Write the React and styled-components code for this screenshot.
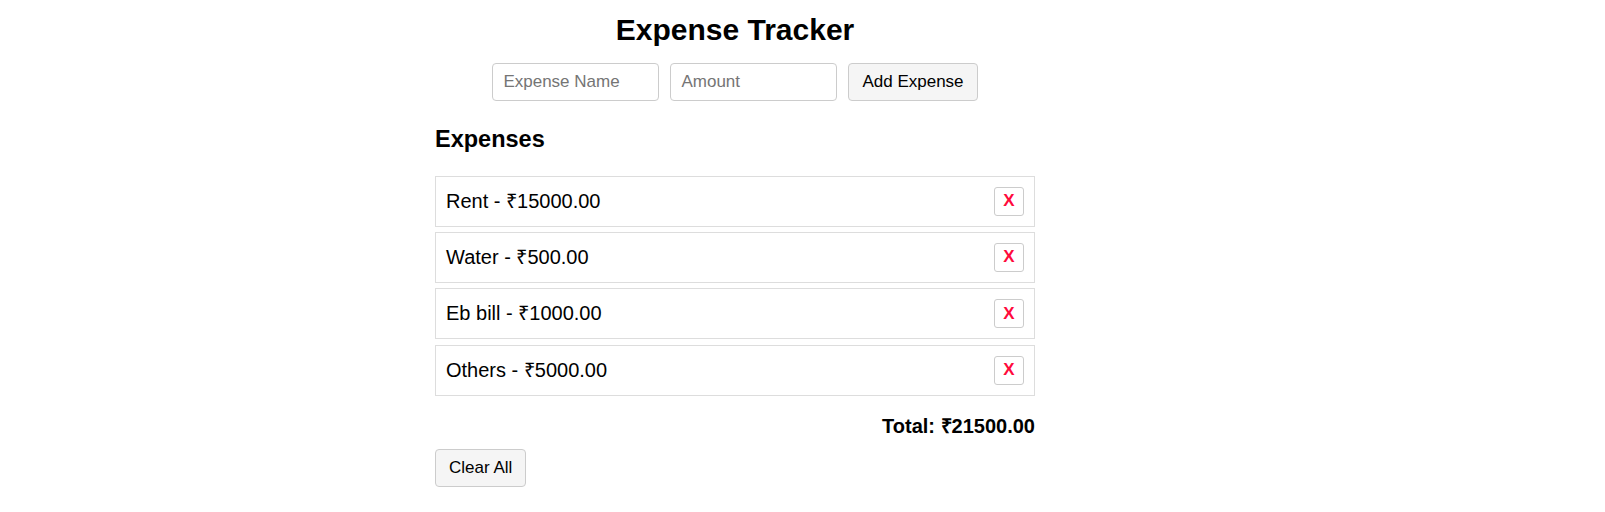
import React, { useState } from "react";
import styled, { createGlobalStyle } from "styled-components";

const GlobalStyle = createGlobalStyle`
  html, body { margin: 0; padding: 0; background: #ffffff; }
  body { font-family: Arial, "Liberation Sans", Helvetica, sans-serif; color: #000; }
`;

const Page = styled.main`
  width: 600px;
  margin-left: 435px;
  display: flex;
  flex-direction: column;
`;

const Title = styled.h1`
  margin: 13px 0 0;
  font-size: 30px;
  line-height: 34px;
  font-weight: 700;
  text-align: center;
`;

const Form = styled.form`
  margin-top: 16px;
  display: flex;
  justify-content: center;
  gap: 11px;
`;

const Input = styled.input`
  box-sizing: border-box;
  width: 167px;
  height: 38px;
  padding: 0 10px;
  border: 1px solid #cccccc;
  border-radius: 4px;
  font-family: inherit;
  font-size: 17px;
  color: #000;
  outline: none;
  &::placeholder { color: #757575; }
`;

const Button = styled.button`
  box-sizing: border-box;
  height: 38px;
  padding: 0 13px;
  border: 1px solid #cccccc;
  border-radius: 4px;
  background: #f5f5f5;
  font-family: inherit;
  font-size: 17px;
  color: #000;
  cursor: pointer;
`;

const Subtitle = styled.h2`
  margin: 25px 0 0;
  font-size: 23.5px;
  line-height: 26px;
  font-weight: 700;
`;

const List = styled.ul`
  list-style: none;
  margin: 23.5px 0 0;
  padding: 0;
  display: flex;
  flex-direction: column;
  gap: 5.4px;
`;

const Row = styled.li`
  box-sizing: border-box;
  height: 51px;
  padding: 0 10px;
  border: 1px solid #dddddd;
  display: flex;
  align-items: center;
  justify-content: space-between;
  font-size: 20px;
`;

const Label = styled.span`
  padding-bottom: 2px;
`;

const Remove = styled.button`
  box-sizing: border-box;
  width: 30px;
  height: 29px;
  padding: 0;
  border: 1px solid #cccccc;
  border-radius: 3px;
  background: #ffffff;
  color: #ff0a3c;
  font-family: inherit;
  font-size: 17px;
  font-weight: 700;
  cursor: pointer;
`;

const Total = styled.h3`
  margin: 19.5px 0 0;
  font-size: 20px;
  line-height: 23px;
  font-weight: 700;
  text-align: right;
`;

const Footer = styled.div`
  margin-top: 11px;
  display: flex;
`;

const initial = [
  { name: "Rent", amount: 15000 },
  { name: "Water", amount: 500 },
  { name: "Eb bill", amount: 1000 },
  { name: "Others", amount: 5000 },
];

export default function App() {
  const [items, setItems] = useState(initial);
  const total = items.reduce((s, i) => s + i.amount, 0);
  return (
    <>
      <GlobalStyle />
      <Page>
        <Title>Expense Tracker</Title>
        <Form onSubmit={(e) => e.preventDefault()}>
          <Input placeholder="Expense Name" />
          <Input placeholder="Amount" type="number" />
          <Button type="submit">Add Expense</Button>
        </Form>
        <Subtitle>Expenses</Subtitle>
        <List>
          {items.map((it, idx) => (
            <Row key={it.name}>
              <Label>
                {it.name} - ₹{it.amount.toFixed(2)}
              </Label>
              <Remove onClick={() => setItems(items.filter((_, i) => i !== idx))}>X</Remove>
            </Row>
          ))}
        </List>
        <Total>Total: ₹{total.toFixed(2)}</Total>
        <Footer>
          <Button onClick={() => setItems([])}>Clear All</Button>
        </Footer>
      </Page>
    </>
  );
}
